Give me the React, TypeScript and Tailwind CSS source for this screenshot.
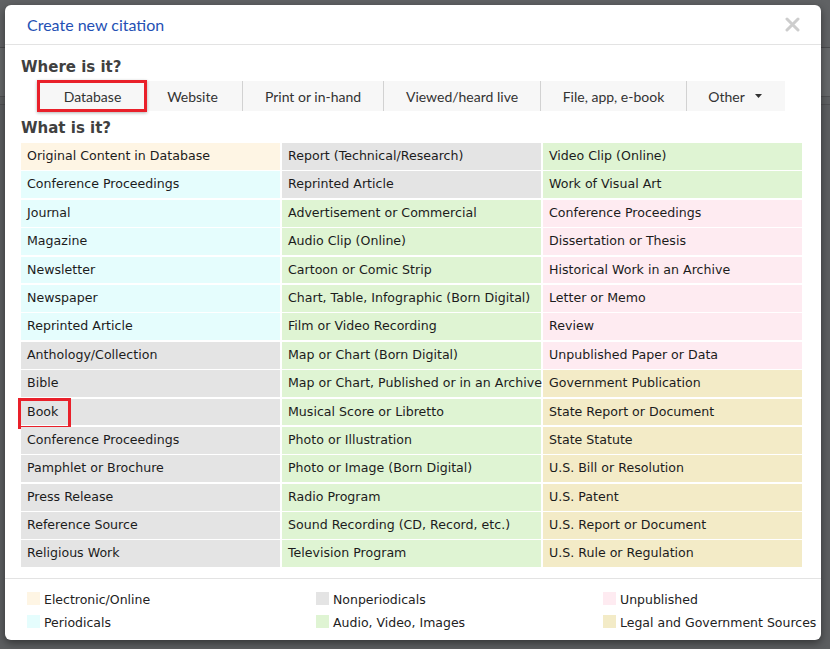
const GREEN = "bg-[#dff4d3]";
const GRAY = "bg-[#e4e4e4]";
const CYAN = "bg-[#e5fdfd]";
const CREAM = "bg-[#fef5e4]";
const PINK = "bg-[#feebf1]";
const TAN = "bg-[#f3ebc7]";

const columns: { label: string; color: string }[][] = [
  [
    { label: "Original Content in Database", color: CREAM },
    { label: "Conference Proceedings", color: CYAN },
    { label: "Journal", color: CYAN },
    { label: "Magazine", color: CYAN },
    { label: "Newsletter", color: CYAN },
    { label: "Newspaper", color: CYAN },
    { label: "Reprinted Article", color: CYAN },
    { label: "Anthology/Collection", color: GRAY },
    { label: "Bible", color: GRAY },
    { label: "Book", color: GRAY },
    { label: "Conference Proceedings", color: GRAY },
    { label: "Pamphlet or Brochure", color: GRAY },
    { label: "Press Release", color: GRAY },
    { label: "Reference Source", color: GRAY },
    { label: "Religious Work", color: GRAY },
  ],
  [
    { label: "Report (Technical/Research)", color: GRAY },
    { label: "Reprinted Article", color: GRAY },
    { label: "Advertisement or Commercial", color: GREEN },
    { label: "Audio Clip (Online)", color: GREEN },
    { label: "Cartoon or Comic Strip", color: GREEN },
    { label: "Chart, Table, Infographic (Born Digital)", color: GREEN },
    { label: "Film or Video Recording", color: GREEN },
    { label: "Map or Chart (Born Digital)", color: GREEN },
    { label: "Map or Chart, Published or in an Archive", color: GREEN },
    { label: "Musical Score or Libretto", color: GREEN },
    { label: "Photo or Illustration", color: GREEN },
    { label: "Photo or Image (Born Digital)", color: GREEN },
    { label: "Radio Program", color: GREEN },
    { label: "Sound Recording (CD, Record, etc.)", color: GREEN },
    { label: "Television Program", color: GREEN },
  ],
  [
    { label: "Video Clip (Online)", color: GREEN },
    { label: "Work of Visual Art", color: GREEN },
    { label: "Conference Proceedings", color: PINK },
    { label: "Dissertation or Thesis", color: PINK },
    { label: "Historical Work in an Archive", color: PINK },
    { label: "Letter or Memo", color: PINK },
    { label: "Review", color: PINK },
    { label: "Unpublished Paper or Data", color: PINK },
    { label: "Government Publication", color: TAN },
    { label: "State Report or Document", color: TAN },
    { label: "State Statute", color: TAN },
    { label: "U.S. Bill or Resolution", color: TAN },
    { label: "U.S. Patent", color: TAN },
    { label: "U.S. Report or Document", color: TAN },
    { label: "U.S. Rule or Regulation", color: TAN },
  ],
];

const tabs = [
  { label: "Database", w: "w-[109px]" },
  { label: "Website", w: "w-[95px]" },
  { label: "Print or in-hand", w: "w-[141px]" },
  { label: "Viewed/heard live", w: "w-[157px]" },
  { label: "File, app, e-book", w: "w-[146px]" },
];

const legend = [
  [
    { label: "Electronic/Online", color: CREAM },
    { label: "Periodicals", color: CYAN },
  ],
  [
    { label: "Nonperiodicals", color: GRAY },
    { label: "Audio, Video, Images", color: GREEN },
  ],
  [
    { label: "Unpublished", color: PINK },
    { label: "Legal and Government Sources", color: TAN },
  ],
];

export default function App() {
  return (
    <div className="relative h-[649px] w-[830px] overflow-hidden bg-[#5c5e60] font-['DejaVu_Sans',sans-serif]">
      {/* dimmed page behind */}
      <div className="h-[48px] border-b border-[#4a4b4d] bg-[#606264]" />
      <div className="h-[49px] border-b border-[#505153] bg-[#66686a]" />
      <div className="h-[8px] border-b border-[#505153] bg-[#5e6062]" />

      {/* Modal */}
      <div className="absolute left-[5px] top-[5px] flex h-[635px] w-[816px] flex-col rounded-[6px] bg-white shadow-[0_3px_8px_rgba(0,0,0,0.45)]">
        <div className="flex h-[40px] items-center justify-between border-b border-[#e3e3e3] pl-[22px] pr-[22px]">
          <span className="font-['Lato',sans-serif] text-[16px] text-[#2450b4]">Create new citation</span>
          <svg width="15" height="15" viewBox="0 0 15 15" className="mr-[-1px]">
            <path d="M2 2 L13 13 M13 2 L2 13" stroke="#cdcdcd" strokeWidth="3" strokeLinecap="round" />
          </svg>
        </div>

        <div className="px-[16px]">
          <h2 className="mt-[12px] text-[15px] font-bold leading-[20px] text-[#404040]">Where is it?</h2>
          <div className="ml-[17px] mt-[4px] flex h-[30px] w-[747px] bg-[#f7f7f7] font-['Lato',sans-serif] text-[14px] text-[#333]">
            {tabs.map((t, i) => (
              <div
                key={t.label}
                className={`relative flex items-center justify-center ${t.w} ${i > 1 ? "border-l border-[#d2d2d2]" : ""} ${i === 1 ? "pr-[4px]" : ""}`}
              >
                {t.label}
                {i === 0 && (
                  <div className="absolute -left-[1px] -top-[1px] -bottom-[1px] right-0 border-[3px] border-[#e9202a] shadow-[0_1px_3px_rgba(0,0,0,0.3)]" />
                )}
              </div>
            ))}
            <div className="flex w-[99px] items-center justify-center gap-[10px] border-l border-[#d2d2d2] pr-[2px]">
              Other
              <svg width="7" height="4" viewBox="0 0 7 4">
                <path d="M0 0 L7 0 L3.5 4 Z" fill="#333" />
              </svg>
            </div>
          </div>

          <h2 className="mt-[7px] text-[15px] font-bold leading-[20px] text-[#404040]">What is it?</h2>
          <div className="mt-[5px] grid w-[781px] grid-cols-3 gap-x-[2px]">
            {columns.map((col, ci) => (
              <div key={ci} className="flex flex-col gap-y-[1.5px]">
                {col.map((c, ri) => (
                  <div
                    key={ri}
                    className={`relative flex h-[26.9px] items-center whitespace-nowrap pl-[6px] text-[12.6px] text-[#1c1c1c] ${c.color}`}
                  >
                    {c.label}
                    {ci === 0 && c.label === "Book" && (
                      <div className="absolute -left-[3px] -top-[1px] h-[31px] w-[53px] border-[3px] border-[#e9202a]" />
                    )}
                  </div>
                ))}
              </div>
            ))}
          </div>
        </div>

        <div className="mt-[11px] flex border-t border-[#e3e3e3] pl-[22px] pt-[13px] text-[12.5px] text-[#222]">
          {legend.map((col, i) => (
            <div key={i} className={`flex flex-col gap-[10px] ${i === 0 ? "w-[289px]" : i === 1 ? "w-[287px]" : ""}`}>
              {col.map((l) => (
                <div key={l.label} className="flex h-[13px] items-center gap-[4px] whitespace-nowrap">
                  <span className={`h-[13px] w-[13px] ${l.color}`} />
                  <span className="leading-[13px] pt-[2px]">{l.label}</span>
                </div>
              ))}
            </div>
          ))}
        </div>
      </div>
    </div>
  );
}
